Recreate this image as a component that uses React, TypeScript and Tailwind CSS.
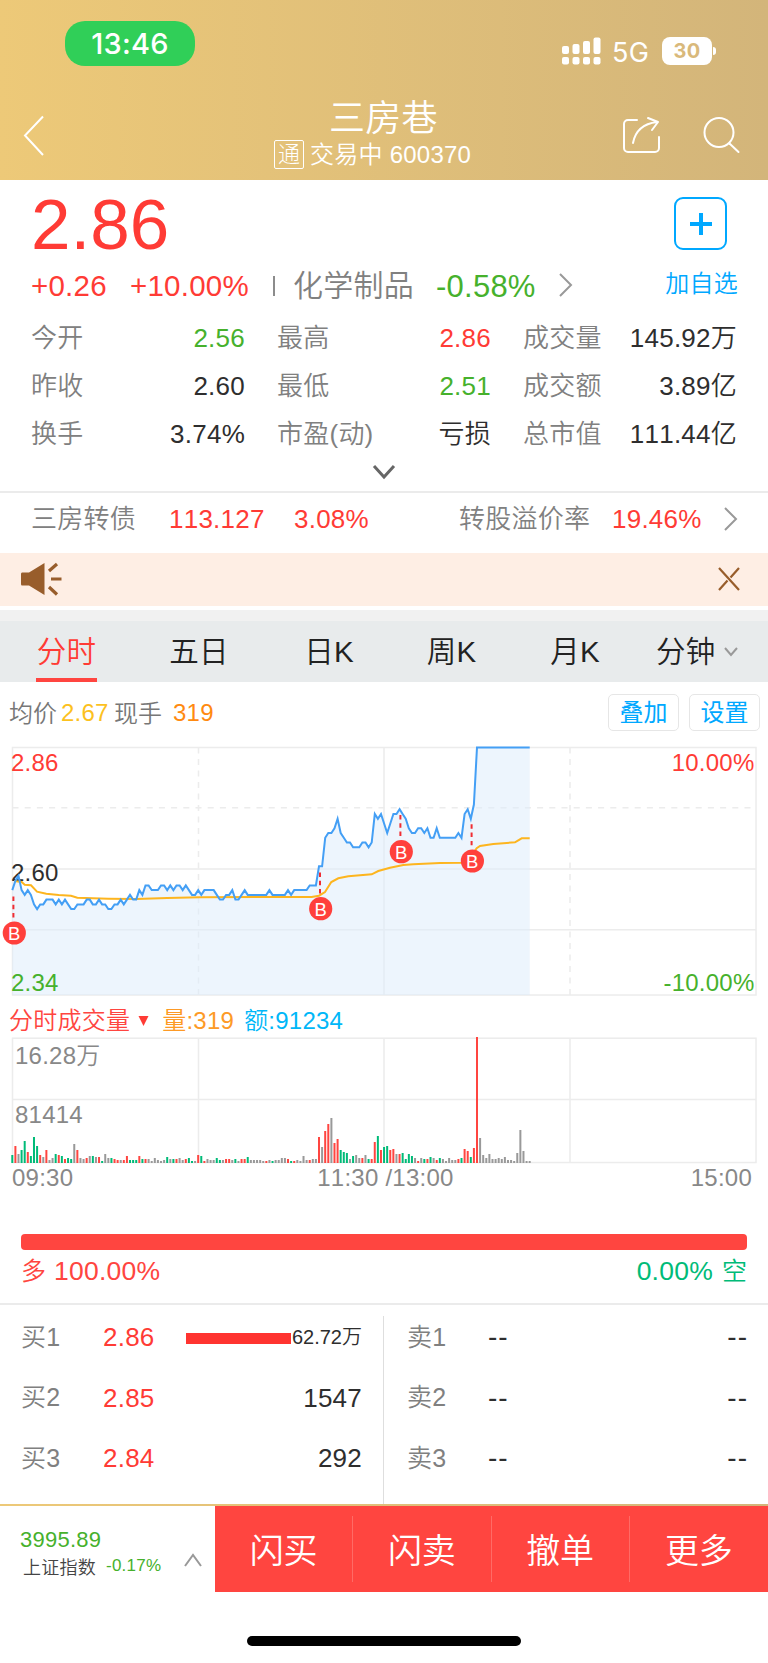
import type { ReactNode } from "react";
import clsx from "clsx";

const RED = "#ff3b35";
const GREEN = "#00bb78";
const GRAY = "#999999";
const GRID = "#ececec";

const stats = [
  { label: "今开", value: "2.56", tone: "text-[#46b12c]" },
  { label: "最高", value: "2.86", tone: "text-[#ff3b35]" },
  { label: "成交量", value: "145.92万", tone: "text-[#2e2e2e]" },
  { label: "昨收", value: "2.60", tone: "text-[#2e2e2e]" },
  { label: "最低", value: "2.51", tone: "text-[#46b12c]" },
  { label: "成交额", value: "3.89亿", tone: "text-[#2e2e2e]" },
  { label: "换手", value: "3.74%", tone: "text-[#2e2e2e]" },
  { label: "市盈(动)", value: "亏损", tone: "text-[#2e2e2e]" },
  { label: "总市值", value: "111.44亿", tone: "text-[#2e2e2e]" },
];

const tabs = [
  { label: "五日", width: "w-[132px]" },
  { label: "日K", width: "w-[128px]" },
  { label: "周K", width: "w-[117px]" },
  { label: "月K", width: "w-[130px]" },
];

const bids = [
  { label: "买1", price: "2.86", volume: "62.72万", bar: true },
  { label: "买2", price: "2.85", volume: "1547" },
  { label: "买3", price: "2.84", volume: "292" },
];

// Minute prices, as ticks below the upper limit (2.86)
const ticks = [
  30, 28, 27, 30, 31, 30, 31, 33, 34, 33, 33, 32, 32, 32, 33, 32, 33, 32, 33,
  34, 34, 33, 33, 33, 32, 32, 33, 33, 32, 33, 33, 34, 34, 33, 33, 32, 33, 32,
  31, 32, 32, 30, 31, 29, 29, 30, 30, 30, 29, 29, 30, 29, 30, 29, 29, 30, 29,
  30, 31, 31, 30, 31, 30, 30, 30, 30, 31, 32, 32, 31, 31, 30, 32, 32, 31, 30,
  31, 31, 31, 31, 31, 31, 31, 30, 31, 31, 31, 31, 31, 30, 31, 30, 30, 30, 30,
  30, 29, 29, 29, 25, 25, 19, 18, 18, 17, 15, 18, 19, 20, 20, 21, 21, 21, 20,
  20, 21, 20, 14, 15, 14, 16, 18, 16, 14, 14, 13, 14, 15, 17, 18, 18, 17, 17,
  18, 17, 19, 19, 17, 19, 19, 19, 19, 19, 19, 18, 19, 14, 13, 15, 12, 0, 0, 0,
  0, 0, 0, 0, 0, 0, 0, 0, 0, 0, 0, 0, 0, 0, 0,
];

const average = [
  [14, 146], [21.7, 147], [24.7, 149.7], [31, 150.3], [37, 156.7],
  [46.3, 158.7], [58.7, 160], [71, 160.7], [77.3, 162.7], [108.3, 163.7],
  [136.3, 164], [167.3, 163], [200, 162.3], [290, 162], [311.7, 162],
  [319, 160.7], [325, 157], [331.3, 147], [338.3, 143.3], [348.3, 141.3],
  [371.7, 139.3], [378.3, 136], [390, 132.7], [403.3, 130], [413.3, 129.3],
  [440, 128], [461.7, 127.7], [470.7, 122], [476.7, 113.3], [480, 111],
  [493.3, 109], [515, 107.3], [521.7, 103.3], [529.7, 103.3],
];

// One entry per minute: u = up, d = down, n = flat, then the bar height
const volumes =
  "d8 u17 n9 d13 d22 u11 d7 d26 d17 u8 n6 u13 n3 n5 d9 u8 d7 u4 d5 d4 n19 u13 n5 n4 u5 n7 d7 n6 u6 d2 " +
  "n9 n5 d5 u4 u3 n3 u3 u7 d3 d3 d3 u7 d4 u4 n4 n2 n5 n3 n2 n3 d6 n4 d4 u4 n5 n3 u4 d5 d2 n2 " +
  "u8 d7 u2 n4 n3 n3 d5 d3 n3 u4 u4 n3 d4 n2 u4 u4 d6 n3 n3 n3 n3 n2 u2 n3 d2 n3 n3 n5 n5 u4 " +
  "d2 u2 n3 n2 n7 n3 u3 n4 n4 u26 n16 u32 u39 n45 u20 u24 d13 d11 d10 n4 d7 n8 n5 u5 n8 d4 u4 u21 d27 u13 " +
  "d16 d17 u13 u14 n9 u9 d10 d4 d9 d7 n5 u2 n5 d4 u4 d6 n5 u3 d5 n4 n2 n5 n3 n3 u4 d5 u14 u12 d6 u15 " +
  "u126 n25 n8 n5 n9 n4 n4 n5 n4 n6 n3 n3 n2 n10 n33 n12 n2 n2";

const markers = [
  { x: 14.3, y: 198, line: 13.4, from: 161.5 },
  { x: 320.7, y: 173.7, line: 320, from: 137.5 },
  { x: 401.3, y: 116.7, line: 400.4, from: 80 },
  { x: 472.4, y: 126, line: 471.6, from: 89.3 },
];

const minuteX = (i: number) => 12.3 + i * 3.098;

function Chevron({ className, points }: { className: string; points: string }) {
  return (
    <svg className={clsx("shrink-0", className)} fill="none" stroke="currentColor">
      <polyline points={points} />
    </svg>
  );
}

function Header() {
  return (
    <header className="h-[180px] bg-gradient-to-r from-[#edc978] to-[#d3b57a] text-white">
      <div className="flex h-[88px] items-start pl-[65px] font-['Inter']">
        <div className="mt-[21px] flex h-[45px] w-[130px] items-center justify-center rounded-[20px] bg-[#30cf58] text-[29px] font-medium leading-none">
          13:46
        </div>
        <svg className="ml-[366px] mt-[37px] h-[29px] w-[40px]" fill="white">
          <rect x="1" y="9" width="7" height="8" rx="2" />
          <rect x="11.5" y="7" width="7" height="10" rx="2" />
          <rect x="22" y="4" width="7" height="13" rx="2" />
          <rect x="32.500" y="0.500" width="7" height="16.500" rx="2" />
          <rect x="1" y="20" width="7" height="7.500" rx="2" />
          <rect x="11.5" y="20" width="7" height="7.500" rx="2" />
          <rect x="22" y="20" width="7" height="7.500" rx="2" />
          <rect x="32.500" y="20" width="7" height="7.500" rx="2" />
        </svg>
        <div className="ml-[11px] mt-[39px] w-[39px] text-[27px] leading-[28px]">5G</div>
        <div className="ml-[11px] mt-[37px] flex h-[28px] w-[50px] items-center justify-center rounded-[8px] bg-white text-[20px] font-bold leading-none text-[#d9b97b]">
          30
        </div>
        <div className="ml-px mt-[47px] h-[8px] w-[3px] rounded-r-full bg-white" />
      </div>
      <div className="flex h-[92px] items-start">
        <Chevron
          className="ml-[22px] mt-[27px] h-[42px] w-[24px] stroke-2"
          points="21,1.500 3,20.500 21,40"
        />
        <div className="ml-[228px] w-[220px]">
          <div className="mt-[11px] pl-[55px] text-[36px] font-[350] leading-[40px]">三房巷</div>
          <div className="flex items-center pt-[1px] text-[24px] leading-[30px]">
            <span className="-mt-px flex h-[29px] w-[30px] items-center justify-center rounded-[2px] border border-white text-[22px] font-light leading-none">
              通
            </span>
            <span className="ml-[6px] whitespace-nowrap font-[350]">交易中 600370</span>
          </div>
        </div>
        <svg
          className="ml-[127px] mt-[27px] h-[40px] w-[42px] stroke-2"
          fill="none"
          stroke="white"
          strokeLinecap="round"
          strokeLinejoin="round"
        >
          <path d="M16 5H7a4 4 0 0 0-4 4v24a4 4 0 0 0 4 4h27a4 4 0 0 0 4-4V22" />
          <path d="M12 28C14 17 20 9 36 7M27 3l10 4-6 8" />
        </svg>
        <svg
          className="ml-[39px] mt-[27px] h-[40px] w-[42px] stroke-2"
          fill="none"
          stroke="white"
          strokeLinecap="round"
        >
          <circle cx="17" cy="17.500" r="14.500" />
          <path d="M27.500 28.500L36.500 37" />
        </svg>
      </div>
    </header>
  );
}

function Quote() {
  return (
    <section className="h-[311px] pl-[31px] pr-[31px]">
      <div className="flex h-[82px] justify-between">
        <div className="pt-[9px] text-[71px] leading-[72px] tracking-normal text-[#ff3b35]">2.86</div>
        <div className="mr-[10px] mt-[17px] flex h-[53px] w-[53px] items-center justify-center rounded-[9px] border-2 border-[#00a8ff]">
          <svg className="h-[24px] w-[24px]" fill="none" stroke="#00a8ff" strokeWidth="4">
            <path d="M1 12H23M12 1V23" />
          </svg>
        </div>
      </div>
      <div className="flex h-[48px] items-center whitespace-nowrap text-[29.500px] leading-none text-[#ff3b35]">
        <span className="w-[99px]">+0.26</span>
        <span className="w-[143px]">+10.00%</span>
        <span className="h-[20px] w-[2px] bg-[#8c8c8c]" />
        <span className="ml-[18px] w-[143px] text-[30px] font-[350] text-[#808080]">化学制品</span>
        <span className="w-[122px] text-[31px] text-[#46b12c]">-0.58%</span>
        <Chevron className="-mt-[2px] h-[26px] w-[16px] stroke-2 text-[#999]" points="2,2 13,13 2,24" />
        <span className="-mr-[9px] -mt-[4px] ml-auto pr-[8px] text-[24px] font-[350] text-[#00a8ff]">加自选</span>
      </div>
      <div className="mt-[4px] grid grid-cols-3 gap-x-[32px] text-[26px]">
        {stats.map((item) => (
          <div
            key={item.label}
            className="flex h-[48px] items-center justify-between whitespace-nowrap leading-none"
          >
            <span className="font-[350] text-[#808080]">{item.label}</span>
            <span className={clsx("font-[350]", item.tone)}>{item.value}</span>
          </div>
        ))}
      </div>
      <div className="flex justify-center pt-[6px]">
        <Chevron
          className="h-[16px] w-[24px] stroke-[3] text-[#666]"
          points="2,2 12,13 22,2"
        />
      </div>
    </section>
  );
}

function BondRow() {
  return (
    <section className="flex h-[62px] items-center whitespace-nowrap border-t-2 border-[#ebebeb] pb-[8px] pl-[31px] text-[26px] leading-none text-[#ff3b35]">
      <span className="w-[138px] text-[26px] font-[350] text-[#808080]">三房转债</span>
      <span className="w-[125px]">113.127</span>
      <span className="w-[165px]">3.08%</span>
      <span className="w-[153px] text-[26px] font-[350] text-[#808080]">转股溢价率</span>
      <span className="w-[111px]">19.46%</span>
      <Chevron className="h-[26px] w-[16px] stroke-2 text-[#999]" points="2,2 13,13 2,24" />
    </section>
  );
}

function Notice() {
  return (
    <section className="flex h-[53px] items-center bg-[#feeee4] pb-[2px]">
      <svg className="ml-[20px] h-[34px] w-[44px]" fill="#985d2b">
        <path d="M2 10.500H9L24.500 1V33L9 23.500H2Q1 23.500 1 22V12Q1 10.500 2 10.500Z" />
        <g fill="none" stroke="#985d2b" strokeWidth="3.200">
          <path d="M29 9L37 2M31 17H41.500M29 25L37 32.500" />
        </g>
      </svg>
      <svg className="ml-[653px] h-[26px] w-[24px]" fill="none" stroke="#985d2b" strokeWidth="2.200">
        <path d="M2 2L22 24M22 2L13.500 11.500M10.500 14.500L2 24" />
      </svg>
    </section>
  );
}

function PeriodTabs() {
  return (
    <nav className="mt-[4px] flex h-[72px] border-t-[11px] border-[#f1f1f1] bg-[#e8ebec] pl-[36px] text-[29.500px] font-[350] leading-[62px] text-[#222]">
      <div className="h-[61px] w-[61px] border-b-[4px] border-[#ff4540] text-center text-[#ff3b35]">
        分时
      </div>
      <div className="ml-[36px] flex text-center">
        {tabs.map((tab) => (
          <div key={tab.label} className={clsx(tab.width, "whitespace-nowrap")}>
            {tab.label}
          </div>
        ))}
      </div>
      <div className="ml-[16px] flex items-center whitespace-nowrap">
        分钟
        <Chevron
          className="ml-[8px] h-[10px] w-[16px] stroke-2 text-[#999]"
          points="2,1 8,8 14,1"
        />
      </div>
    </nav>
  );
}

function ChartButton({ children }: { children: ReactNode }) {
  return (
    <button className="h-[37px] w-[71px] rounded-[5px] border border-[#e6e6e6] pt-[2px] text-[24px] leading-none tracking-normal text-[#00a8ff]">
      {children}
    </button>
  );
}

function PriceChart() {
  const line = ticks.map((t, i) => `${minuteX(i).toFixed(1)},${(12.4 + t * 4.757).toFixed(1)}`).join(" ");

  return (
    <svg className="block h-[268px] w-full" fontSize="24">
      <g fill="none" stroke={GRID} strokeWidth="1.500">
        <rect x="12.5" y="12.5" width="743.500" height="247.500" />
        <path d="M12.500 134H756M12.500 194.700H756M384 12.500V260" />
        <path d="M12.500 72.700H756" strokeDasharray="6 6.200" />
        <path d="M198.500 12.500V260M570 12.500V260" strokeDasharray="6 5.500" />
      </g>
      <polygon points={`12.3,260 ${line} 529.7,260`} fill="#dcebfb" fillOpacity="0.5" />
      <text x="11" y="35.500" fill={RED}>2.86</text>
      <text x="11" y="145.500" fill="#2e2e2e">2.60</text>
      <text x="11" y="255.500" fill="#46b12c">2.34</text>
      <text x="754.500" y="35.500" fill={RED} textAnchor="end">10.00%</text>
      <text x="754.500" y="255.500" fill="#46b12c" textAnchor="end">-10.00%</text>
      <polyline
        points={average.map((p) => p.join(",")).join(" ")}
        fill="none"
        stroke="#fdb51f"
        strokeWidth="2"
      />
      <polyline points={line} fill="none" stroke="#449ff5" strokeWidth="2" />
      {markers.map((m) => (
        <g key={m.x}>
          <path
            d={`M${m.line} ${m.from}v21`}
            stroke="#f02d33"
            strokeWidth="2"
            strokeDasharray="4.500 3.800"
          />
          <circle cx={m.x} cy={m.y} r="11.600" fill="#ff403c" />
          <text x={m.x} y={m.y + 7} fill="white" fontSize="18.500" textAnchor="middle">
            B
          </text>
        </g>
      ))}
    </svg>
  );
}

function VolumeChart() {
  const colors: Record<string, string> = { u: "#ff4540", d: GREEN, n: GRAY };

  return (
    <svg className="block h-[130px] w-full" fontSize="24">
      <g fill="none" stroke={GRID} strokeWidth="1.500">
        <rect x="12.5" y="3.200" width="743.500" height="124.300" />
        <path d="M12.500 64.500H756M198.500 3.200V127.500M384 3.200V127.500M570 3.200V127.500" />
      </g>
      {volumes.split(" ").map((v, i) => (
        <rect
          key={i}
          x={minuteX(i) - 1}
          y={128 - Number(v.slice(1))}
          width="2"
          height={Number(v.slice(1))}
          fill={colors[v[0]]}
        />
      ))}
      <text x="15" y="29" fill="#888">
        16.28<tspan fontWeight="350">万</tspan>
      </text>
      <text x="15" y="88" fill="#888">81414</text>
    </svg>
  );
}

function Chart() {
  return (
    <section className="h-[551px]">
      <div className="flex h-[53px] items-center whitespace-nowrap pl-[9px] pr-[8px] pt-[7px] text-[24px] leading-none">
        <span className="w-[52px] pt-[3px] font-[350] tracking-normal text-[#777]">均价</span>
        <span className="w-[53px] pt-[2px] text-[#fcc11e]">2.67</span>
        <span className="w-[59px] pt-[3px] font-[350] tracking-normal text-[#777]">现手</span>
        <span className="pt-[2px] text-[#ff8a10]">319</span>
        <div className="ml-auto flex gap-[10px]">
          <ChartButton>叠加</ChartButton>
          <ChartButton>设置</ChartButton>
        </div>
      </div>
      <PriceChart />
      <div className="flex h-[32px] items-center whitespace-nowrap pl-[9px] pt-[4px] text-[24px] leading-none text-[#ff4540]">
        <span className="font-[350]">分时成交量</span>
        <svg className="ml-[8px] h-[10px] w-[11px]" fill="#ff3b35">
          <polygon points="0.500,0 10.500,0 5.500,10" />
        </svg>
        <span className="ml-[13px] font-[350] text-[#fd9a26]">量:319</span>
        <span className="ml-[10px] font-[350] text-[#00b7f8]">额:91234</span>
      </div>
      <VolumeChart />
      <div className="flex h-[26px] items-center whitespace-nowrap pl-[12px] pr-[16px] text-[24px] leading-none text-[#888]">
        <span>09:30</span>
        <span className="ml-[244px]">11:30 /13:00</span>
        <span className="ml-auto">15:00</span>
      </div>
    </section>
  );
}

function LongShort() {
  return (
    <section className="mt-px h-[69px] px-[21px]">
      <div className="h-[16px] rounded-[4px] bg-[#ff4540]" />
      <div className="flex justify-between pt-[8px] text-[26.500px] leading-[26px]">
        <span className="flex text-[#ff4540]">
          <span className="mr-[8px] text-[25px] font-[350] tracking-normal">多</span>100.00%
        </span>
        <span className="flex text-[#00bb78]">
          0.00%<span className="ml-[9px] text-[25px] font-[350] tracking-normal">空</span>
        </span>
      </div>
    </section>
  );
}

function OrderBook() {
  return (
    <section className="flex h-[201px] border-t-2 border-[#ebebeb] text-[26px] leading-none text-[#2e2e2e]">
      <div className="w-[383px] pl-[21px] pr-[21px] pt-[2px]">
        {bids.map((bid) => (
          <div key={bid.label} className="flex h-[60.500px] items-center">
            <span className="w-[82px] text-[25px] font-[350] text-[#808080]">{bid.label}</span>
            <span className="w-[83px] text-[#ff3b35]">{bid.price}</span>
            {bid.bar && <span className="mt-[3px] h-[11px] w-[105px] bg-[#ff3430]" />}
            <span
              className={clsx(
                "ml-auto whitespace-nowrap",
                bid.bar && "text-[20px] font-[350] tracking-normal"
              )}
            >
              {bid.volume}
            </span>
          </div>
        ))}
      </div>
      <div className="mt-[11px] w-px bg-[#dedede]" />
      <div className="flex-1 pl-[23px] pr-[21px] pt-[2px]">
        {["卖1", "卖2", "卖3"].map((label) => (
          <div key={label} className="flex h-[60.500px] items-center">
            <span className="w-[81px] text-[25px] font-[350] text-[#808080]">{label}</span>
            <span className="text-[28px] tracking-[1px]">--</span>
            <span className="-mr-px ml-auto text-[28px] tracking-[1px]">--</span>
          </div>
        ))}
      </div>
    </section>
  );
}

function BottomBar() {
  return (
    <footer className="h-[159px]">
      <div className="h-[2px] bg-gradient-to-r from-[#edc978] to-[#d3b57a]" />
      <div className="flex h-[86px]">
        <div className="flex w-[215px] items-center whitespace-nowrap leading-none">
          <div className="w-[164px] pl-[20px] pt-[9px]">
            <div className="text-[22px] leading-[24px] text-[#46b12c]">3995.89</div>
            <div className="flex items-center pl-[3px] pt-[4px] text-[18px] leading-[24px]">
              <span className="w-[83px] font-[350] text-[#444]">上证指数</span>
              <span className="-mt-[3px] text-[17px] text-[#46b12c]">-0.17%</span>
            </div>
          </div>
          <Chevron
            className="ml-[20px] mt-[21px] h-[14px] w-[18px] stroke-2 text-[#999]"
            points="1,13 9,2 17,13"
          />
        </div>
        <div className="grid flex-1 grid-cols-4 bg-[#ff4540] pt-[4px] text-[34px] font-[350] leading-none tracking-normal text-white">
          {["闪买", "闪卖", "撤单", "更多"].map((label, i) => (
            <div key={label} className="flex items-center">
              <div className="flex-1 text-center">{label}</div>
              {i < 3 && <div className="-mt-[4px] h-[66px] w-px bg-[#ff6b66]" />}
            </div>
          ))}
        </div>
      </div>
      <div className="mx-auto mt-[44px] h-[10px] w-[274px] rounded-full bg-black" />
    </footer>
  );
}

export default function App() {
  return (
    <main className="h-[1663px] w-[768px] overflow-hidden bg-white font-['Liberation_Sans','Noto_Sans_CJK_SC',sans-serif] tracking-[0.015em] [font-kerning:none]">
      <Header />
      <Quote />
      <BondRow />
      <Notice />
      <PeriodTabs />
      <Chart />
      <LongShort />
      <OrderBook />
      <BottomBar />
    </main>
  );
}
